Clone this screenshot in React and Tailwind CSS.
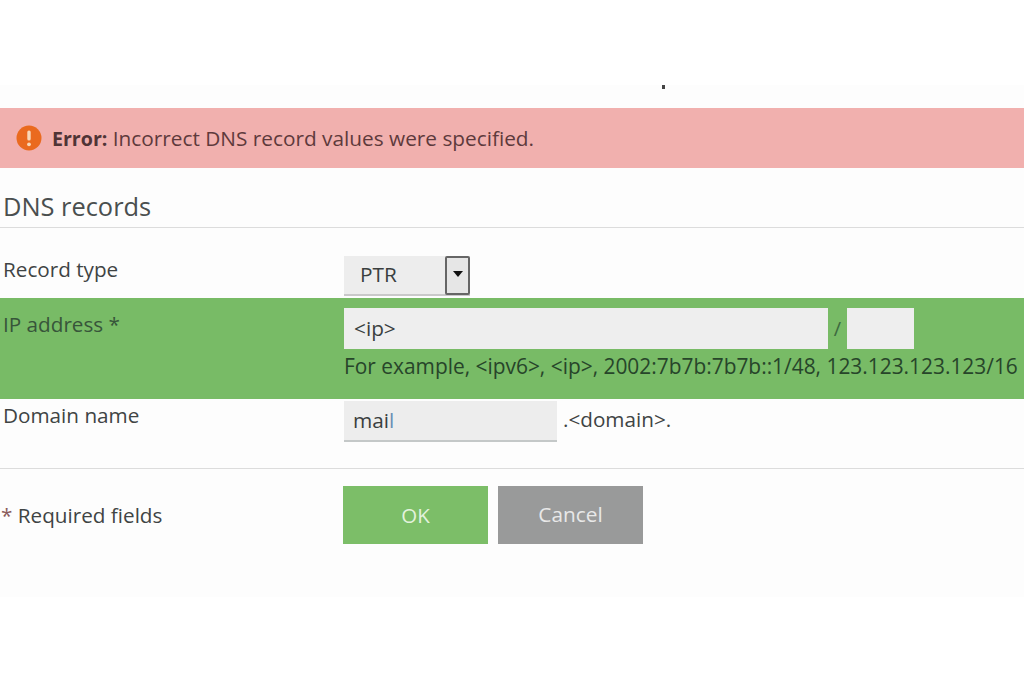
export default function App() {
  return (
    <div className="w-[1024px] h-[683px] overflow-hidden bg-white font-['Open_Sans',sans-serif] text-[#3f4444]">
      <div className="h-[85px]" />
      <div className="h-[512px] bg-[#fdfdfd] flex flex-col relative">
        <div className="absolute left-[662px] top-0 w-[3px] h-[4px] bg-[#444]" />
        <div className="h-[23px] shrink-0" />
        <div className="h-[60px] shrink-0 bg-[#f1b0ae] flex items-center pl-[16px]">
          <svg width="26" height="26" viewBox="0 0 26 26" className="shrink-0">
            <circle cx="13" cy="13" r="12.5" fill="#ea6a1f" />
            <rect x="11.3" y="5.5" width="3.4" height="10" rx="1.6" fill="#f8d8b8" />
            <circle cx="13" cy="19.3" r="1.9" fill="#f8d8b8" />
          </svg>
          <span className="ml-[10px] text-[20.8px] leading-[26px] text-[#5e3a3c] whitespace-nowrap">
            <b className="font-bold text-[19.6px] text-[#4f3436]">Error:</b> Incorrect DNS record values were specified.
          </span>
        </div>
        <div className="h-[60px] shrink-0 border-b border-[#dcdcdc] flex items-end pl-[3px] pb-[4px]">
          <h2 className="text-[25.4px] leading-[34px] text-[#4a4f4f]">DNS records</h2>
        </div>
        <div className="h-[70px] shrink-0 flex">
          <div className="w-[344px] pl-[3px] pt-[28px] text-[20.7px] leading-[26px]">Record type</div>
          <div className="pt-[28px]">
            <div className="w-[126px] h-[40px] bg-[#ededed] border-b-2 border-[#c9c9c9] flex items-center justify-between">
              <span className="pl-[16px] text-[20.8px] text-[#3a3f3f]">PTR</span>
              <div className="w-[25px] h-[39px] bg-[#e6e6e6] border-2 border-[#666] rounded-[2px] flex items-center justify-center pb-[3px]">
                <div className="w-0 h-0 border-l-[5px] border-r-[5px] border-t-[6px] border-l-transparent border-r-transparent border-t-[#111]" />
              </div>
            </div>
          </div>
        </div>
        <div className="h-[101px] shrink-0 bg-[#78bb66] flex">
          <div className="w-[344px] pl-[3px] pt-[13px] text-[20.7px] leading-[26px] text-[#37553a]">IP address *</div>
          <div className="pt-[10px] flex flex-col">
            <div className="flex items-center">
              <div className="w-[484px] h-[41px] bg-[#eeeeee] pl-[10px] flex items-center text-[20.8px] text-[#3a3f3f]">&lt;ip&gt;</div>
              <span className="w-[19px] text-center text-[20px] text-[#3d6a40]">/</span>
              <div className="w-[67px] h-[41px] bg-[#eeeeee]" />
            </div>
            <p className="mt-[4px] text-[20.9px] leading-[26px] whitespace-nowrap text-[#27452a]">
              For example, &lt;ipv6&gt;, &lt;ip&gt;, 2002:7b7b:7b7b::1/48, 123.123.123.123/16
            </p>
          </div>
        </div>
        <div className="h-[70px] shrink-0 border-b border-[#dcdcdc] flex">
          <div className="w-[344px] pl-[3px] pt-[3px] text-[20.7px] leading-[26px]">Domain name</div>
          <div className="pt-[2px] flex items-start">
            <div className="w-[213px] h-[41px] bg-[#ededed] border-b-2 border-[#c4c8c8] pl-[9px] flex items-center text-[20.8px] text-[#3a3f3f]">
              <span>mai<span className="text-[#6a8fb5]">l</span></span>
            </div>
            <span className="ml-[6px] mt-[5px] text-[20.7px] leading-[26px]">.&lt;domain&gt;.</span>
          </div>
        </div>
        <div className="flex pt-[17px]">
          <div className="w-[343px] pl-[1px] pt-[16px] text-[20.7px] leading-[26px] whitespace-nowrap">
            <span className="text-[#8a5a5a]">*</span> Required fields
          </div>
          <div className="flex gap-[10px]">
            <button className="w-[145px] h-[58px] bg-[#7cbe68] text-[#e3f2dc] text-[20.5px]">OK</button>
            <button className="w-[145px] h-[58px] bg-[#999a9a] text-[#e8e8e8] text-[20.8px]">Cancel</button>
          </div>
        </div>
      </div>
    </div>
  );
}
